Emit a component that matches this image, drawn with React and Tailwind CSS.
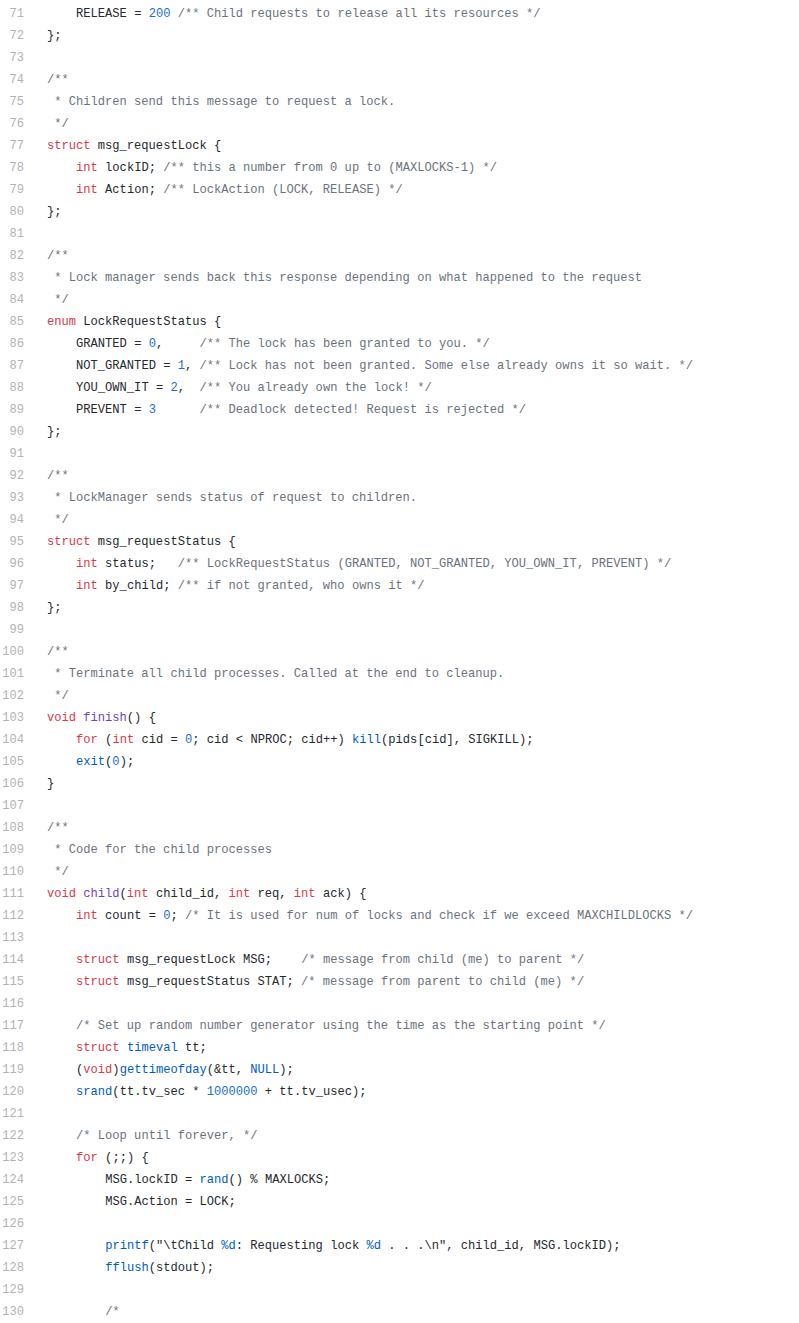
import React from 'react';

const lines = [
  '    RELEASE = 200 /** Child requests to release all its resources */',
  '};',
  '',
  '/**',
  ' * Children send this message to request a lock.',
  ' */',
  'struct msg_requestLock {',
  '    int lockID; /** this a number from 0 up to (MAXLOCKS-1) */',
  '    int Action; /** LockAction (LOCK, RELEASE) */',
  '};',
  '',
  '/**',
  ' * Lock manager sends back this response depending on what happened to the request',
  ' */',
  'enum LockRequestStatus {',
  '    GRANTED = 0,     /** The lock has been granted to you. */',
  '    NOT_GRANTED = 1, /** Lock has not been granted. Some else already owns it so wait. */',
  '    YOU_OWN_IT = 2,  /** You already own the lock! */',
  '    PREVENT = 3      /** Deadlock detected! Request is rejected */',
  '};',
  '',
  '/**',
  ' * LockManager sends status of request to children.',
  ' */',
  'struct msg_requestStatus {',
  '    int status;   /** LockRequestStatus (GRANTED, NOT_GRANTED, YOU_OWN_IT, PREVENT) */',
  '    int by_child; /** if not granted, who owns it */',
  '};',
  '',
  '/**',
  ' * Terminate all child processes. Called at the end to cleanup.',
  ' */',
  'void finish() {',
  '    for (int cid = 0; cid < NPROC; cid++) kill(pids[cid], SIGKILL);',
  '    exit(0);',
  '}',
  '',
  '/**',
  ' * Code for the child processes',
  ' */',
  'void child(int child_id, int req, int ack) {',
  '    int count = 0; /* It is used for num of locks and check if we exceed MAXCHILDLOCKS */',
  '',
  '    struct msg_requestLock MSG;    /* message from child (me) to parent */',
  '    struct msg_requestStatus STAT; /* message from parent to child (me) */',
  '',
  '    /* Set up random number generator using the time as the starting point */',
  '    struct timeval tt;',
  '    (void)gettimeofday(&tt, NULL);',
  '    srand(tt.tv_sec * 1000000 + tt.tv_usec);',
  '',
  '    /* Loop until forever, */',
  '    for (;;) {',
  '        MSG.lockID = rand() % MAXLOCKS;',
  '        MSG.Action = LOCK;',
  '',
  '        printf("\\tChild %d: Requesting lock %d . . .\\n", child_id, MSG.lockID);',
  '        fflush(stdout);',
  '',
  '        /*',
];

const colors = {
  plain: 'text-[#24292e]',
  kw: 'text-[#d73a49]',
  def: 'text-[#6f42c1]',
  call: 'text-[#005cc5]',
  num: 'text-[#1a6fd0]',
  comment: 'text-[#6a737d]',
};

const keywords = ['int', 'struct', 'void', 'for', 'enum'];
const blueWords = ['timeval', 'NULL'];
const defined = ['finish', 'child'];

// tiny highlighter, keeps block comment state across lines
function tokenize(all) {
  let inComment = false;
  return all.map((line) => {
    const out = [];
    let i = 0;
    const push = (type, text) => out.push([type, text]);
    while (i < line.length) {
      if (inComment) {
        const end = line.indexOf('*/', i);
        if (end === -1) {
          push('comment', line.slice(i));
          i = line.length;
        } else {
          push('comment', line.slice(i, end + 2));
          i = end + 2;
          inComment = false;
        }
        continue;
      }
      if (line.startsWith('/*', i)) {
        inComment = true;
        continue;
      }
      if (i === 0 && /^ \*/.test(line)) {
        inComment = true;
        continue;
      }
      const ch = line[i];
      if (ch === '"') {
        let j = i + 1;
        while (j < line.length && line[j] !== '"') j++;
        const str = line.slice(i, j + 1);
        str.split(/(%d)/).forEach((part) => {
          if (part) push(part === '%d' ? 'call' : 'plain', part);
        });
        i = j + 1;
        continue;
      }
      if (/[A-Za-z_]/.test(ch)) {
        let j = i;
        while (j < line.length && /[A-Za-z0-9_]/.test(line[j])) j++;
        const word = line.slice(i, j);
        let type = 'plain';
        if (keywords.includes(word)) type = 'kw';
        else if (blueWords.includes(word)) type = 'call';
        else if (line[j] === '(') type = defined.includes(word) ? 'def' : 'call';
        push(type, word);
        i = j;
        continue;
      }
      if (/[0-9]/.test(ch)) {
        let j = i;
        while (j < line.length && /[0-9]/.test(line[j])) j++;
        push('num', line.slice(i, j));
        i = j;
        continue;
      }
      push('plain', ch);
      i++;
    }
    return out;
  });
}

const tokens = tokenize(lines);

export default function App() {
  return (
    <div className="w-[799px] h-[1323px] bg-white pt-[3px] overflow-hidden font-['Liberation_Mono',monospace] text-[12.1px] leading-[22px]">
      {tokens.map((toks, idx) => (
        <div key={idx} className="flex h-[22px]">
          <div className="w-[24px] shrink-0 text-right text-[#b3b3b3]">{71 + idx}</div>
          <div className="ml-[23px] whitespace-pre">
            {toks.map(([type, text], k) => (
              <span key={k} className={colors[type]}>
                {text}
              </span>
            ))}
          </div>
        </div>
      ))}
    </div>
  );
}
